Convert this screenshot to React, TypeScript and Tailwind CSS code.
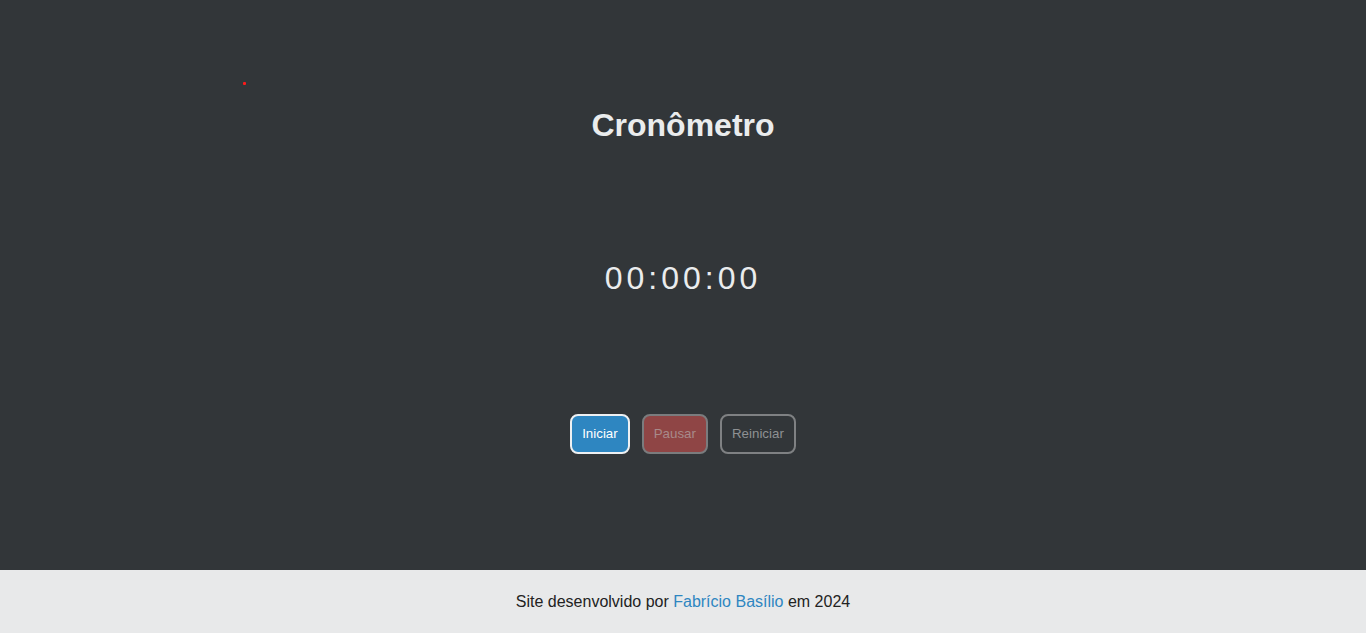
import React from "react";

export default function App() {
  return (
    <div className="min-h-[633px] flex flex-col bg-[#323639]" style={{ fontFamily: '"Liberation Sans", Arial, sans-serif' }}>
      <main className="relative flex-1 flex flex-col items-center h-[570px]">
        <span className="absolute left-[243px] top-[82px] w-[3px] h-[3px] rounded-[1px] bg-[#ff1a1a]" />
        <h1 className="mt-[107px] text-[32px] leading-[37px] font-bold text-[#eaeced]">Cronômetro</h1>
        <div className="mt-[116px] text-[32px] leading-[37px] tracking-[4px] text-[#eaeced]">00:00:00</div>
        <div className="mt-[117px] flex gap-3">
          <button className="h-[40px] px-[10px] rounded-[8px] border-2 border-[#eef0f2] bg-[#2e86c1] text-[13.33px] text-white">Iniciar</button>
          <button className="h-[40px] px-[10px] rounded-[8px] border-2 border-[#7a7c7e] bg-[#8f4545] text-[13.33px] text-[#a88a8a]">Pausar</button>
          <button className="h-[40px] px-[10px] rounded-[8px] border-2 border-[#7f8183] bg-transparent text-[13.33px] text-[#8e9193]">Reiniciar</button>
        </div>
      </main>
      <footer className="h-[63px] bg-[#e8e9ea] flex items-center justify-center text-[16px] text-[#222]">
        <p>
          Site desenvolvido por <a className="text-[#2e86c1]">Fabrício Basílio</a> em 2024
        </p>
      </footer>
    </div>
  );
}
